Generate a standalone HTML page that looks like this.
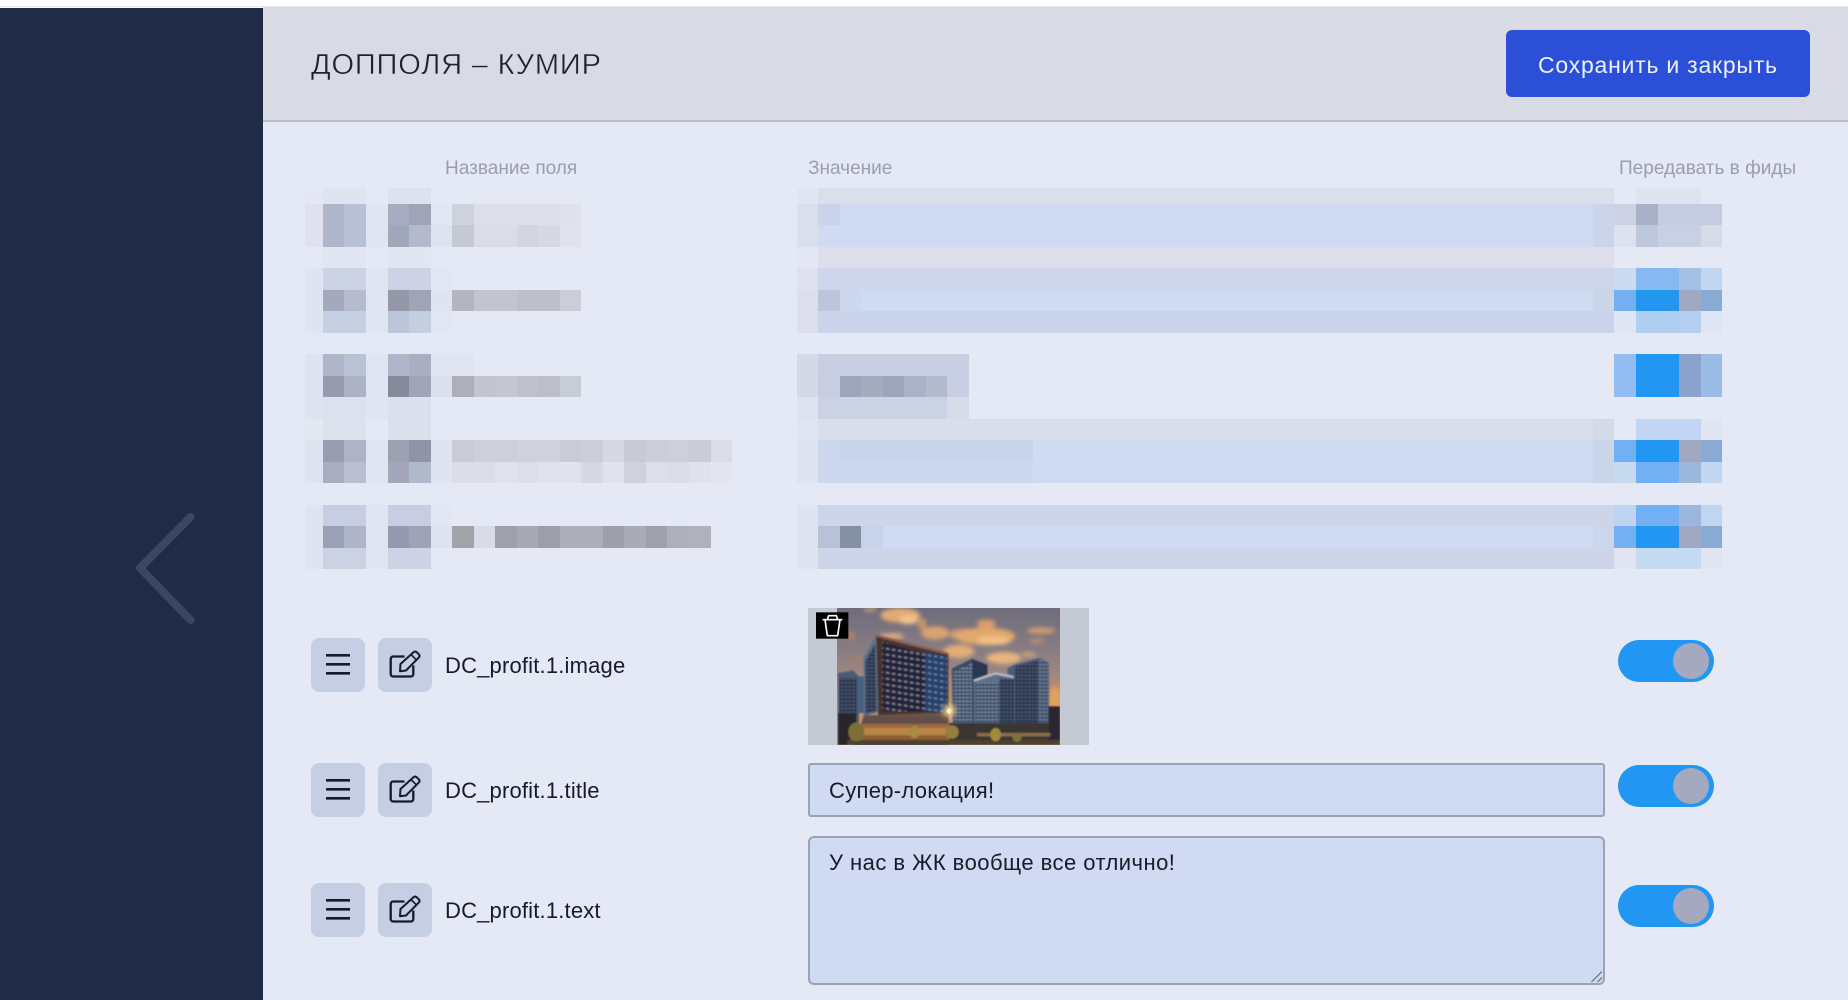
<!DOCTYPE html>
<html lang="ru">
<head>
<meta charset="utf-8">
<title>Допполя – Кумир</title>
<style>
html,body{margin:0;padding:0;width:1848px;height:1000px;overflow:hidden;background:#fff;font-family:"Liberation Sans","DejaVu Sans",sans-serif}
.a{position:absolute}
.t{position:absolute;white-space:nowrap;line-height:1}
#side{left:0;top:8px;width:263px;height:992px;background:#202c47}
#head{left:263px;top:7px;width:1585px;height:113px;background:#d8dbe3;border-bottom:2px solid #b9bdc9}
#main{left:263px;top:122px;width:1585px;height:878px;background:#e5e9f5}
#btn{left:1506px;top:30px;width:304px;height:67px;background:#2c4fd8;border-radius:6px}
.hl{font-size:19.05px;color:#9a9eac}
.lab{font-size:22px;color:#171b29;letter-spacing:.18px}
.ib{position:absolute;width:54px;height:54px;background:#c5cee3;border-radius:8px}
.field{position:absolute;background:#d0dbf3;border:2px solid #9aa2b6;box-sizing:border-box}
.tog{position:absolute;left:1618px;width:96px;height:42px;border-radius:21px;background:#2196f3}
.tog i{position:absolute;left:55px;top:3px;width:36px;height:36px;border-radius:50%;background:#a5a9c0;display:block}
svg{position:absolute;display:block}
</style>
</head>
<body>
<div class="a" style="left:0;top:6px;width:1848px;height:1px;background:#e6e7ea"></div>
<div class="a" id="side"></div>
<svg style="left:0;top:0" width="263" height="1000"><polyline points="190.500,517 140,568 190.500,620" fill="none" stroke="#3a4663" stroke-width="8" stroke-linecap="round" stroke-linejoin="round"/></svg>
<div class="a" id="head"></div>
<div class="a" id="main"></div>

<div class="t" style="left:311px;top:50.500px;font-size:29px;letter-spacing:.83px;color:#1d2130;-webkit-text-stroke:.45px #d8dbe3">ДОППОЛЯ – КУМИР</div>
<div class="a" id="btn"></div>
<div class="t" style="left:1538px;top:53.500px;font-size:23px;color:#eef1fd;letter-spacing:.77px">Сохранить и закрыть</div>

<div class="t hl" style="left:445px;top:158.500px">Название поля</div>
<div class="t hl" style="left:808px;top:158.500px">Значение</div>
<div class="t hl" style="left:1619px;top:158.500px">Передавать в фиды</div>

<!-- pixelated rows -->
<svg style="left:0;top:0" width="1848" height="1000" shape-rendering="crispEdges">
<!-- left columns -->
<g>
<rect x="305" y="188" width="18" height="16" fill="#e4e8f4"/><rect x="323" y="188" width="43" height="16" fill="#dfe4f1"/><rect x="388" y="188" width="43" height="16" fill="#dde2ef"/>
<rect x="305" y="204" width="18" height="43" fill="#dfe2ee"/><rect x="323" y="204" width="21" height="43" fill="#afb6ca"/><rect x="344" y="204" width="22" height="43" fill="#b7c0d4"/><rect x="366" y="204" width="22" height="43" fill="#e0e5f1"/>
<rect x="388" y="204" width="21" height="21" fill="#a6adc0"/><rect x="409" y="204" width="22" height="21" fill="#9fa4b7"/><rect x="431" y="204" width="21" height="21" fill="#e3e7f3"/>
<rect x="452" y="204" width="22" height="21" fill="#ced2dc"/><rect x="474" y="204" width="86" height="21" fill="#dcdfe8"/><rect x="560" y="204" width="21" height="21" fill="#dfe2eb"/>
<rect x="388" y="225" width="21" height="22" fill="#a0a7b9"/><rect x="409" y="225" width="22" height="22" fill="#b3bacc"/><rect x="431" y="225" width="21" height="22" fill="#dfe3ef"/>
<rect x="452" y="225" width="22" height="22" fill="#c5c9d2"/><rect x="474" y="225" width="43" height="22" fill="#dadde6"/><rect x="517" y="225" width="21" height="22" fill="#d3d6e0"/><rect x="538" y="225" width="22" height="22" fill="#d6d9e2"/><rect x="560" y="225" width="21" height="22" fill="#e0e3ec"/>
<rect x="323" y="247" width="43" height="21" fill="#e2e6f2"/><rect x="388" y="247" width="43" height="21" fill="#e2e6f2"/>

<rect x="305" y="268" width="18" height="65" fill="#e0e4f0"/><rect x="366" y="268" width="22" height="65" fill="#e0e5f1"/>
<rect x="323" y="268" width="43" height="22" fill="#ccd3e5"/><rect x="388" y="268" width="43" height="22" fill="#cdd3e5"/><rect x="431" y="268" width="21" height="22" fill="#e3e7f3"/>
<rect x="323" y="290" width="21" height="21" fill="#a4aabc"/><rect x="344" y="290" width="22" height="21" fill="#b4bccd"/><rect x="388" y="290" width="21" height="21" fill="#9598a9"/><rect x="409" y="290" width="22" height="21" fill="#a0a4b5"/><rect x="431" y="290" width="21" height="21" fill="#e0e4f0"/>
<rect x="452" y="290" width="22" height="21" fill="#b3b6bf"/><rect x="474" y="290" width="43" height="21" fill="#c2c4cf"/><rect x="517" y="290" width="43" height="21" fill="#bdbfca"/><rect x="560" y="290" width="21" height="21" fill="#cbced8"/>
<rect x="323" y="311" width="43" height="22" fill="#c6d0e3"/><rect x="388" y="311" width="21" height="22" fill="#bcc6da"/><rect x="409" y="311" width="22" height="22" fill="#c4cee1"/><rect x="431" y="311" width="21" height="22" fill="#e3e7f3"/>

<rect x="305" y="354" width="18" height="65" fill="#dfe3ef"/><rect x="366" y="354" width="22" height="65" fill="#e0e5f1"/>
<rect x="323" y="354" width="21" height="22" fill="#b0b6c9"/><rect x="344" y="354" width="22" height="22" fill="#b9c1d4"/><rect x="388" y="354" width="21" height="22" fill="#b0b6c9"/><rect x="409" y="354" width="22" height="22" fill="#a9afc1"/><rect x="431" y="354" width="43" height="22" fill="#e1e5f1"/>
<rect x="323" y="376" width="21" height="21" fill="#989bad"/><rect x="344" y="376" width="22" height="21" fill="#adb3c6"/><rect x="388" y="376" width="21" height="21" fill="#868a9a"/><rect x="409" y="376" width="22" height="21" fill="#a1a5b8"/><rect x="431" y="376" width="21" height="21" fill="#dce0ec"/>
<rect x="452" y="376" width="22" height="21" fill="#adb0b8"/><rect x="474" y="376" width="21" height="21" fill="#c3c6ce"/><rect x="495" y="376" width="22" height="21" fill="#c5c8d0"/><rect x="517" y="376" width="21" height="21" fill="#bfc1cb"/><rect x="538" y="376" width="22" height="21" fill="#bcbec8"/><rect x="560" y="376" width="21" height="21" fill="#c8ccd5"/>
<rect x="323" y="397" width="43" height="43" fill="#dde1ed"/><rect x="388" y="397" width="43" height="43" fill="#dce0ed"/><rect x="305" y="419" width="18" height="21" fill="#e4e8f3"/>

<rect x="305" y="440" width="18" height="43" fill="#dfe3ef"/><rect x="366" y="440" width="22" height="43" fill="#e0e5f1"/><rect x="431" y="440" width="21" height="43" fill="#dfe4f0"/>
<rect x="323" y="440" width="21" height="22" fill="#9a9daf"/><rect x="344" y="440" width="22" height="22" fill="#adb4c6"/><rect x="388" y="440" width="21" height="22" fill="#9da1b2"/><rect x="409" y="440" width="22" height="22" fill="#9194a7"/>
<rect x="452" y="440" width="22" height="22" fill="#c9ccd6"/><rect x="474" y="440" width="43" height="22" fill="#cdd0da"/><rect x="517" y="440" width="43" height="22" fill="#cfd2dc"/><rect x="560" y="440" width="21" height="22" fill="#c9ccd6"/><rect x="581" y="440" width="22" height="22" fill="#cbced9"/><rect x="603" y="440" width="21" height="22" fill="#d6d9e4"/><rect x="624" y="440" width="22" height="22" fill="#c8cbd5"/><rect x="646" y="440" width="21" height="22" fill="#cbced8"/><rect x="667" y="440" width="22" height="22" fill="#cdd0da"/><rect x="689" y="440" width="22" height="22" fill="#cacdd7"/><rect x="711" y="440" width="21" height="22" fill="#dadde8"/>
<rect x="323" y="462" width="21" height="21" fill="#a9aec1"/><rect x="344" y="462" width="22" height="21" fill="#b7bfd1"/><rect x="388" y="462" width="21" height="21" fill="#a3a7b9"/><rect x="409" y="462" width="22" height="21" fill="#b1b9cc"/>
<rect x="452" y="462" width="43" height="21" fill="#dbdee8"/><rect x="495" y="462" width="22" height="21" fill="#e0e3ec"/><rect x="517" y="462" width="21" height="21" fill="#dcdfe9"/><rect x="538" y="462" width="43" height="21" fill="#e0e3ec"/><rect x="581" y="462" width="22" height="21" fill="#d6d9e3"/><rect x="603" y="462" width="21" height="21" fill="#e0e3ee"/><rect x="624" y="462" width="22" height="21" fill="#cfd2dc"/><rect x="646" y="462" width="21" height="21" fill="#dcdfe9"/><rect x="667" y="462" width="22" height="21" fill="#dadde7"/><rect x="689" y="462" width="22" height="21" fill="#dfe2ec"/><rect x="711" y="462" width="21" height="21" fill="#e3e6f0"/>

<rect x="305" y="505" width="18" height="64" fill="#e0e4f0"/><rect x="366" y="505" width="22" height="64" fill="#e0e5f1"/>
<rect x="323" y="505" width="43" height="21" fill="#c8cee1"/><rect x="388" y="505" width="43" height="21" fill="#c8cee1"/><rect x="431" y="505" width="21" height="21" fill="#e3e7f3"/>
<rect x="323" y="526" width="21" height="22" fill="#9ba1b5"/><rect x="344" y="526" width="22" height="22" fill="#aeb5c8"/><rect x="388" y="526" width="21" height="22" fill="#9699ad"/><rect x="409" y="526" width="22" height="22" fill="#9ea4b8"/><rect x="431" y="526" width="21" height="22" fill="#dfe3f0"/>
<rect x="452" y="526" width="22" height="22" fill="#a1a3a9"/><rect x="474" y="526" width="21" height="22" fill="#d9dce6"/><rect x="495" y="526" width="22" height="22" fill="#a0a0aa"/><rect x="517" y="526" width="21" height="22" fill="#a9a9b3"/><rect x="538" y="526" width="22" height="22" fill="#9e9ea9"/><rect x="560" y="526" width="43" height="22" fill="#adaeb8"/><rect x="603" y="526" width="21" height="22" fill="#9f9fab"/><rect x="624" y="526" width="22" height="22" fill="#a9abb5"/><rect x="646" y="526" width="21" height="22" fill="#a0a0ac"/><rect x="667" y="526" width="22" height="22" fill="#aeb0b9"/><rect x="689" y="526" width="22" height="22" fill="#b0b1bb"/>
<rect x="323" y="548" width="43" height="21" fill="#cad2e4"/><rect x="388" y="548" width="43" height="21" fill="#cbd3e5"/>
</g>
<!-- input column -->
<g>
<rect x="797" y="188" width="21" height="16" fill="#e1e5f1"/><rect x="818" y="188" width="796" height="16" fill="#dadfec"/>
<rect x="797" y="204" width="21" height="43" fill="#dadfeb"/><rect x="818" y="204" width="775" height="43" fill="#d0dbf3"/><rect x="818" y="204" width="22" height="21" fill="#c9d4e9"/><rect x="1593" y="204" width="21" height="43" fill="#cbd5e9"/>
<rect x="797" y="247" width="21" height="21" fill="#e3e7f3"/><rect x="818" y="247" width="796" height="21" fill="#dcdfeb"/>
<rect x="797" y="268" width="21" height="22" fill="#dfe2ee"/><rect x="818" y="268" width="796" height="22" fill="#cdd6ea"/>
<rect x="797" y="290" width="21" height="43" fill="#dcdfeb"/><rect x="818" y="290" width="775" height="21" fill="#d0dbf3"/><rect x="818" y="290" width="22" height="21" fill="#bcc5da"/><rect x="840" y="290" width="21" height="21" fill="#cdd7ee"/><rect x="1593" y="290" width="21" height="21" fill="#cbd5e9"/><rect x="818" y="311" width="796" height="22" fill="#c9d4ea"/>

<rect x="797" y="354" width="21" height="43" fill="#d5d9e7"/><rect x="818" y="354" width="151" height="22" fill="#c8cfe3"/>
<rect x="818" y="376" width="22" height="21" fill="#c7cee2"/><rect x="840" y="376" width="21" height="21" fill="#9ca6bb"/><rect x="861" y="376" width="22" height="21" fill="#a3adc0"/><rect x="883" y="376" width="21" height="21" fill="#9ba5bb"/><rect x="904" y="376" width="22" height="21" fill="#a9b2c6"/><rect x="926" y="376" width="21" height="21" fill="#b3bbce"/><rect x="947" y="376" width="22" height="21" fill="#c9cfe2"/>
<rect x="797" y="397" width="21" height="22" fill="#dfe3ef"/><rect x="818" y="397" width="151" height="22" fill="#cbd2e4"/><rect x="947" y="397" width="22" height="22" fill="#d8dce9"/>
<rect x="797" y="419" width="21" height="21" fill="#e1e5f1"/><rect x="818" y="419" width="775" height="21" fill="#d8dfeb"/><rect x="1593" y="419" width="21" height="21" fill="#d5dae8"/>
<rect x="797" y="440" width="21" height="43" fill="#e0e4f0"/><rect x="818" y="440" width="775" height="43" fill="#d0dbf3"/><rect x="818" y="440" width="22" height="22" fill="#cdd8ef"/><rect x="840" y="440" width="193" height="22" fill="#c9d3ea"/><rect x="818" y="462" width="215" height="21" fill="#cdd8ef"/><rect x="1593" y="440" width="21" height="43" fill="#cbd5e9"/>
<rect x="797" y="505" width="21" height="64" fill="#e0e4f0"/><rect x="818" y="505" width="796" height="21" fill="#ccd5e9"/>
<rect x="818" y="526" width="775" height="22" fill="#d0dbf3"/><rect x="818" y="526" width="22" height="22" fill="#b7c2d8"/><rect x="840" y="526" width="21" height="22" fill="#8690a3"/><rect x="861" y="526" width="22" height="22" fill="#c8d2e8"/><rect x="1593" y="526" width="21" height="22" fill="#cdd7eb"/>
<rect x="818" y="548" width="796" height="21" fill="#cdd6e8"/>
</g>
<!-- toggle column -->
<g>
<rect x="1636" y="188" width="65" height="16" fill="#e0e4f0"/>
<rect x="1614" y="204" width="22" height="21" fill="#ccd2e3"/><rect x="1636" y="204" width="22" height="21" fill="#a9b1c9"/><rect x="1658" y="204" width="64" height="21" fill="#c5cce0"/>
<rect x="1614" y="225" width="22" height="22" fill="#dde2ee"/><rect x="1636" y="225" width="22" height="22" fill="#bfc7dd"/><rect x="1658" y="225" width="43" height="22" fill="#c8d0e3"/><rect x="1701" y="225" width="21" height="22" fill="#d6dbe8"/>

<rect x="1614" y="268" width="22" height="22" fill="#cbdcf2"/><rect x="1636" y="268" width="43" height="22" fill="#86b8f2"/><rect x="1679" y="268" width="22" height="22" fill="#a3c0e6"/><rect x="1701" y="268" width="21" height="22" fill="#c3d6ef"/>
<rect x="1614" y="290" width="22" height="21" fill="#72aff3"/><rect x="1636" y="290" width="43" height="21" fill="#2396f2"/><rect x="1679" y="290" width="22" height="21" fill="#a0a9c2"/><rect x="1701" y="290" width="21" height="21" fill="#8aaad6"/>
<rect x="1614" y="311" width="22" height="22" fill="#e0e6f4"/><rect x="1636" y="311" width="43" height="22" fill="#aecef2"/><rect x="1679" y="311" width="22" height="22" fill="#b4cff0"/><rect x="1701" y="311" width="21" height="22" fill="#dee5f3"/>

<rect x="1614" y="354" width="22" height="43" fill="#91bdf3"/><rect x="1636" y="354" width="43" height="43" fill="#2196f3"/><rect x="1679" y="354" width="22" height="43" fill="#8aa3cd"/><rect x="1701" y="354" width="21" height="43" fill="#9abce6"/>

<rect x="1636" y="419" width="65" height="21" fill="#c0d6f2"/><rect x="1701" y="419" width="21" height="21" fill="#e0e5f1"/>
<rect x="1614" y="440" width="22" height="22" fill="#72aff3"/><rect x="1636" y="440" width="43" height="22" fill="#2196f3"/><rect x="1679" y="440" width="22" height="22" fill="#a0a8c2"/><rect x="1701" y="440" width="21" height="22" fill="#8aaad6"/>
<rect x="1614" y="462" width="22" height="21" fill="#c8daf0"/><rect x="1636" y="462" width="43" height="21" fill="#72aff3"/><rect x="1679" y="462" width="22" height="21" fill="#9cb7de"/><rect x="1701" y="462" width="21" height="21" fill="#c3d6ef"/>

<rect x="1614" y="505" width="22" height="21" fill="#bdd5f2"/><rect x="1636" y="505" width="43" height="21" fill="#72aff3"/><rect x="1679" y="505" width="22" height="21" fill="#9cb7de"/><rect x="1701" y="505" width="21" height="21" fill="#c0d5f0"/>
<rect x="1614" y="526" width="22" height="22" fill="#72aff3"/><rect x="1636" y="526" width="43" height="22" fill="#2196f3"/><rect x="1679" y="526" width="22" height="22" fill="#a0a8c2"/><rect x="1701" y="526" width="21" height="22" fill="#8aaad6"/>
<rect x="1614" y="548" width="22" height="21" fill="#e0e5f1"/><rect x="1636" y="548" width="65" height="21" fill="#c5daf3"/><rect x="1701" y="548" width="21" height="21" fill="#e0e5f1"/>
</g>
</svg>

<!-- icon symbols -->
<svg width="0" height="0" style="left:0;top:0">
<symbol id="ham" viewBox="0 0 54 54"><path d="M15 17.300h24M15 26.300h24M15 35.300h24" fill="none" stroke="#161b2b" stroke-width="2.700"/></symbol>
<symbol id="edt" viewBox="0 0 54 54"><path d="M26.500 18.500H15.200a2.500 2.500 0 0 0-2.500 2.500v15a2.500 2.500 0 0 0 2.500 2.500h17.600a2.500 2.500 0 0 0 2.500-2.500V27.500" fill="none" stroke="#161b2b" stroke-width="2.300" stroke-linejoin="round"/><path d="M22.500 26 35.500 14.300q1.700-1.500 3.300 0l2 2q1.500 1.700 0 3.300L28 32.500l-6 .8z" fill="none" stroke="#161b2b" stroke-width="2" stroke-linejoin="round"/><path d="M33 16.500l5.800 5.800" fill="none" stroke="#161b2b" stroke-width="1.600"/></symbol>
</svg>

<!-- row 1 -->
<div class="ib" style="left:311px;top:638px"><svg width="54" height="54"><use href="#ham"/></svg></div>
<div class="ib" style="left:378px;top:638px"><svg width="54" height="54"><use href="#edt"/></svg></div>
<div class="t lab" style="left:445px;top:655px">DC_profit.1.image</div>
<!-- row 2 -->
<div class="ib" style="left:311px;top:763px"><svg width="54" height="54"><use href="#ham"/></svg></div>
<div class="ib" style="left:378px;top:763px"><svg width="54" height="54"><use href="#edt"/></svg></div>
<div class="t lab" style="left:445px;top:780px">DC_profit.1.title</div>
<!-- row 3 -->
<div class="ib" style="left:311px;top:883px"><svg width="54" height="54"><use href="#ham"/></svg></div>
<div class="ib" style="left:378px;top:883px"><svg width="54" height="54"><use href="#edt"/></svg></div>
<div class="t lab" style="left:445px;top:900px">DC_profit.1.text</div>

<!-- image widget -->
<div class="a" style="left:808px;top:608px;width:281px;height:137px;background:#c5c9d4"></div>
<svg style="left:837px;top:608px" width="223" height="137" viewBox="0 0 669 411">
<defs>
<linearGradient id="sky" x1="0" y1="0" x2="0" y2="1"><stop offset="0" stop-color="#6e6c7b"/><stop offset=".35" stop-color="#8c7f84"/><stop offset=".6" stop-color="#b58e78"/><stop offset="1" stop-color="#d69a62"/></linearGradient>
<pattern id="w1" width="18" height="18" patternUnits="userSpaceOnUse" patternTransform="skewY(9)"><rect width="18" height="18" fill="#20233a"/><rect x="3" y="6" width="10" height="5" fill="#8d8c94"/></pattern>
<pattern id="w4" width="18" height="18" patternUnits="userSpaceOnUse" patternTransform="skewY(9)"><rect width="18" height="18" fill="#27406c"/><rect x="3" y="6" width="10" height="5" fill="#6f87a9"/></pattern>
<pattern id="w2" width="11" height="11" patternUnits="userSpaceOnUse"><rect width="11" height="11" fill="#3c4c66"/><rect x="1" y="3" width="8" height="4" fill="#8a9bb0"/></pattern>
<pattern id="w3" width="11" height="11" patternUnits="userSpaceOnUse"><rect width="11" height="11" fill="#2a3650"/><rect x="2" y="3" width="6" height="3" fill="#66788f"/></pattern>
<filter id="b1" x="-30%" y="-30%" width="160%" height="160%"><feGaussianBlur stdDeviation="6"/></filter>
<filter id="b2" x="-10%" y="-10%" width="120%" height="120%"><feGaussianBlur stdDeviation="2"/></filter>
<filter id="b3" x="-100%" y="-100%" width="300%" height="300%"><feGaussianBlur stdDeviation="8"/></filter>
</defs>
<rect width="669" height="411" fill="url(#sky)"/>
<g filter="url(#b1)">
<ellipse cx="190" cy="22" rx="60" ry="22" fill="#e2aa75"/><ellipse cx="215" cy="35" rx="28" ry="14" fill="#f2c28c"/><ellipse cx="100" cy="5" rx="20" ry="7" fill="#b99579"/>
<ellipse cx="295" cy="75" rx="42" ry="20" fill="#dba271"/><ellipse cx="255" cy="48" rx="14" ry="18" fill="#c39470"/>
<ellipse cx="165" cy="85" rx="38" ry="9" fill="#e0ab7e"/><ellipse cx="42" cy="85" rx="12" ry="16" fill="#ad7f6c"/><ellipse cx="60" cy="155" rx="24" ry="7" fill="#a27f68"/>
<ellipse cx="386" cy="80" rx="50" ry="18" fill="#d09c72"/><ellipse cx="445" cy="85" rx="90" ry="26" fill="#e3a76d"/><ellipse cx="470" cy="98" rx="50" ry="13" fill="#f5c184"/><ellipse cx="448" cy="48" rx="28" ry="14" fill="#dc9d6c"/>
<ellipse cx="612" cy="68" rx="42" ry="10" fill="#d09a71"/><ellipse cx="600" cy="100" rx="22" ry="7" fill="#c08c6c"/>
<ellipse cx="366" cy="130" rx="46" ry="20" fill="#e2ad77"/><ellipse cx="500" cy="150" rx="52" ry="18" fill="#e8b57d"/><ellipse cx="575" cy="140" rx="22" ry="7" fill="#d3a278"/>
<ellipse cx="655" cy="285" rx="20" ry="50" fill="#e3a05c"/>
</g>
<g filter="url(#b2)">
<!-- left low block -->
<path d="M3 195l45-8 18 18v206H3z" fill="#4d5c72"/><path d="M8 210h52v110H8z" fill="url(#w3)"/><path d="M62 205h20v110H62z" fill="#456080"/><path d="M3 315h55v96H3z" fill="#26252c"/>
<!-- main left face -->
<path d="M80 150l38-68 8 230-46 14z" fill="#5c6f86"/><path d="M86 158l28-50 5 200-33 10z" fill="url(#w3)"/>
<!-- main front -->
<path d="M118 80l216 55v190H124z" fill="#4a322f"/>
<path d="M136 102l130 36v172H136z" fill="url(#w1)"/>
<path d="M264 130l66 18v165h-66z" fill="url(#w4)"/>
<path d="M118 80l216 55-1 6-214-54z" fill="#8d5f4d"/>
<!-- towers -->
<path d="M344 182l62-30 45 18v30l-40 15v145h-63z" fill="#3a4964"/><path d="M348 190l58-25v190h-58z" fill="url(#w2)"/><path d="M406 155l45 16v29l-45 14z" fill="#2c374f"/>
<path d="M411 215l65-22 55 12v150H411z" fill="#5f708a"/><path d="M415 222h70v130h-70z" fill="url(#w2)"/><path d="M487 210l44 3v140h-44z" fill="url(#w3)"/><path d="M411 215l65-22 55 12-1 5-54-11-65 22z" fill="#bcc2cc"/>
<path d="M511 182l20-12 75-20 30 15v200H531V205l-20-8z" fill="#4d5d78"/><path d="M534 175l70-17v205h-70z" fill="url(#w3)"/><path d="M606 155l30 10v198h-30z" fill="url(#w2)" opacity=".75"/>
<path d="M634 295h35v116h-35z" fill="#2a2830"/>
<!-- podium -->
<path d="M80 322l254-8v100H50z" fill="#6d5447"/>
<path d="M80 326h254v20H80z" fill="#625049"/>
<path d="M70 348h264v12H70z" fill="#9c6845"/>
<path d="M60 360h274v22H60z" fill="#b98545"/>
<path d="M40 382h294v15H40z" fill="#8f5d36"/>
<path d="M336 345h300v66H336z" fill="#3a3431"/>
<path d="M420 375h220v10H420z" fill="#8e6c48"/>
<path d="M30 396h639v15H30z" fill="#4c3f31"/>
<ellipse cx="58" cy="372" rx="24" ry="28" fill="#7d6e38"/><ellipse cx="232" cy="372" rx="16" ry="18" fill="#a68c40"/><ellipse cx="345" cy="372" rx="20" ry="20" fill="#93803c"/><ellipse cx="476" cy="380" rx="16" ry="20" fill="#a08c38"/><ellipse cx="540" cy="388" rx="14" ry="14" fill="#7f7136"/>
</g>
<ellipse cx="336" cy="308" rx="20" ry="18" fill="#ffd98c" opacity=".85" filter="url(#b3)"/>
<ellipse cx="336" cy="309" rx="7" ry="8" fill="#fff1c4"/>
</svg>
<svg style="left:790px;top:590px" width="330" height="170" viewBox="0 0 990 510">
<rect x="78" y="67" width="97" height="79" fill="#000"/>
<path d="M98 89h59M112 89l4-12h23l4 12M105 89l7 48h31l7-48" fill="none" stroke="#fff" stroke-width="5" stroke-linejoin="round"/>
</svg>

<!-- input -->
<div class="field" style="left:808px;top:763px;width:797px;height:54px;border-radius:3px"></div>
<div class="t lab" style="left:829px;top:780px;letter-spacing:.3px">Супер-локация!</div>
<!-- textarea -->
<div class="field" style="left:808px;top:836px;width:797px;height:149px;border-radius:6px"></div>
<div class="t lab" style="left:829px;top:852px;letter-spacing:.46px">У нас в ЖК вообще все отлично!</div>
<svg style="left:1585px;top:965px" width="20" height="20"><path d="M6.500 17 17 6.500M12.500 17l4.500-4.500" stroke="#666b78" stroke-width="1.200" fill="none"/></svg>

<!-- toggles -->
<div class="tog" style="top:640px"><i></i></div>
<div class="tog" style="top:765px"><i></i></div>
<div class="tog" style="top:885px"><i></i></div>
</body>
</html>
